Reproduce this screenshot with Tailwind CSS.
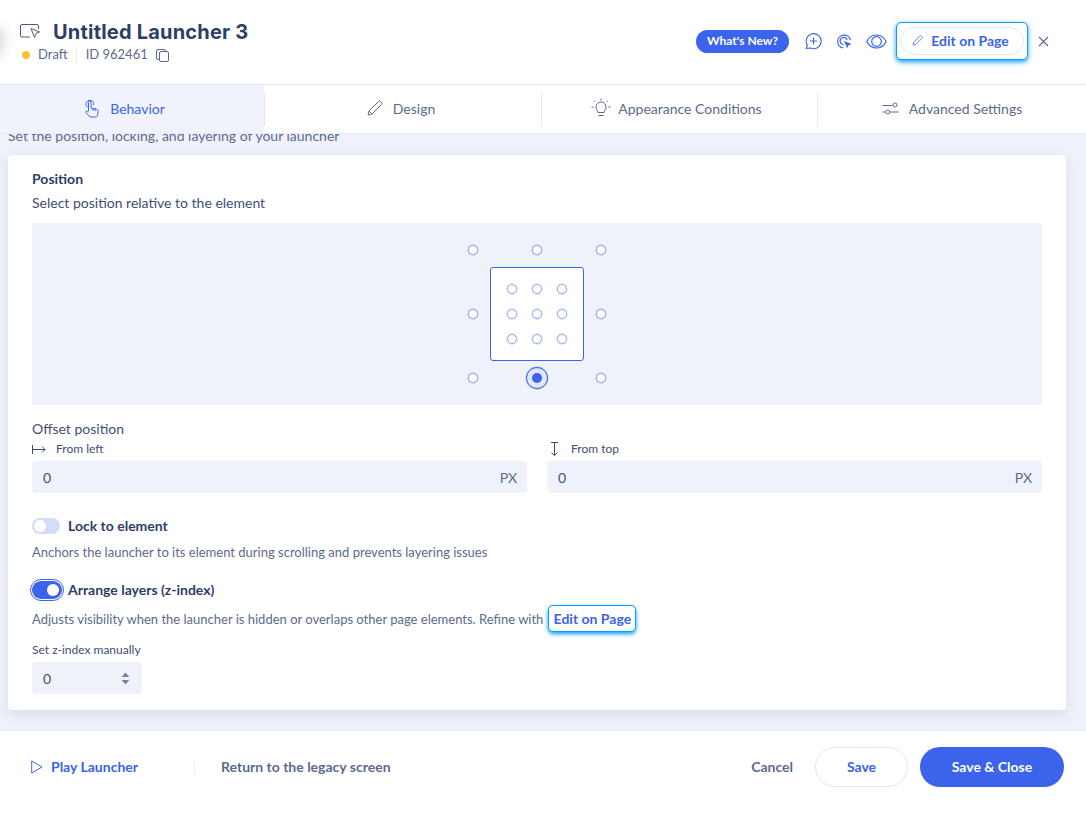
<!DOCTYPE html>
<html lang="en">
  <head>
    <meta charset="UTF-8" />
    <title>Untitled Launcher 3</title>
    <script src="https://cdn.jsdelivr.net/npm/@tailwindcss/browser@4"></script>
  </head>
  <body class="bg-white font-['Lato','Open_Sans',sans-serif] text-[#5c6a8d] overflow-hidden">
    <div class="w-[1086px] h-[817px] flex flex-col relative overflow-hidden">
      <!-- soft shadow on the left edge of the header -->
      <div class="absolute left-[-14px] top-[26px] w-[18px] h-[30px] rounded-full bg-[#d8dbe3] blur-[6px]"></div>

      <!-- Header -->
      <header class="h-[85px] shrink-0 border-b border-[#e9ecf7] flex items-start justify-between pl-[20px] pr-[37px]">
        <div class="pt-[19px]">
          <div class="flex items-center h-[24px]">
            <svg class="w-[21px] h-[15px]" viewBox="0 0 21 15" fill="none" stroke="#4b5a80" stroke-width="1">
              <path d="M10 13H2a1.500 1.500 0 0 1-1.500-1.500V2A1.500 1.500 0 0 1 2 .5h15A1.500 1.500 0 0 1 18.500 2v3" />
              <path d="M11 4.500l8.500 3.500-3.500 1.500-1.500 4z" fill="white" />
            </svg>
            <h1 class="ml-[12px] pt-[1px] font-['Inter',sans-serif] text-[20px] font-bold text-[#2c3e68] tracking-[0.2px]">Untitled Launcher 3</h1>
          </div>
          <div class="flex items-center mt-[3px] text-[13px] h-[18px]">
            <span class="w-[8px] h-[8px] ml-[2px] rounded-full bg-[#fcc132]"></span>
            <span class="ml-[8px]">Draft</span>
            <span class="w-px h-[16px] bg-[#e9ecf7] ml-[8px] mr-[9px]"></span>
            <span>ID 962461</span>
            <svg class="w-[13px] h-[13px] ml-[8px]" viewBox="0 0 13 13" fill="none" stroke="#5c6a8d" stroke-width="1">
              <rect x="3.500" y="2.500" width="9" height="10" rx="1.500" />
              <path d="M3.500 10.500H2A1.500 1.500 0 0 1 .5 9V2A1.500 1.500 0 0 1 2 .5h6A1.500 1.500 0 0 1 9.500 2" />
            </svg>
          </div>
        </div>

        <div class="flex items-center pt-[22px]">
          <span class="w-[93px] h-[23px] rounded-full bg-[#3b63ec] text-white text-[12px] font-bold flex items-center justify-center">What's New?</span>
          <svg class="w-[18px] h-[18px] ml-[15px]" viewBox="0 0 18 18" fill="none" stroke="#3b63ec" stroke-width="1.100">
            <path d="M2 16.500l1.500-3A7.500 7.500 0 1 1 6.500 16l-4.500.5z" stroke-linejoin="round" />
            <path d="M9.500 5.500v7M6 9h7" />
          </svg>
          <svg class="w-[17px] h-[17px] ml-[14px]" viewBox="0 0 17 17" fill="none" stroke="#3b63ec" stroke-width="1.200">
            <path d="M7 15A6.500 6.500 0 1 1 14.500 7" />
            <path d="M7.500 11.500A3.500 3.500 0 1 1 11 7" />
            <path d="M8 8l7.500 3-3 1.200-1.200 3z" fill="#3b63ec" stroke="none" />
          </svg>
          <svg class="w-[21px] h-[15px] ml-[13px]" viewBox="0 0 21 15" fill="none" stroke="#3b63ec" stroke-width="1.200">
            <path d="M.8 7.500C3 3 6.500 1 10.500 1s7.500 2 9.700 6.500C18 12 14.500 14 10.500 14S3 12 .8 7.500z" />
            <circle cx="10.500" cy="7.500" r="4.800" />
          </svg>
          <div class="ml-[9px] w-[132px] h-[38px] rounded-[5px] border border-[#0a9bff] bg-white shadow-[0_2px_5px_#0a9bff] flex items-center justify-center">
            <span class="w-[124px] h-[28px] rounded-full border border-[#dfe5fb] flex items-center justify-center text-[14px] font-bold text-[#3b63ec] pr-[3px] pb-[1px]">
              <svg class="w-[11px] h-[11px] mr-[8px]" viewBox="0 0 11 11" fill="none" stroke="#5d7cf0" stroke-width="0.900">
                <path d="M1 10l.7-3L7.800 1a1 1 0 0 1 1.400 0l.8.8a1 1 0 0 1 0 1.400L4 9.300z" stroke-linejoin="round" />
              </svg>
              Edit on Page
            </span>
          </div>
          <svg class="w-[11px] h-[11px] ml-[10px]" viewBox="0 0 11 11" fill="none" stroke="#5c6a8d" stroke-width="1.100">
            <path d="M1 1l9 9M10 1l-9 9" />
          </svg>
        </div>
      </header>

      <!-- Tabs -->
      <nav class="h-[49px] shrink-0 border-b border-[#e9ecf7] flex text-[14px] bg-white relative z-10">
        <div class="w-[264px] bg-[#f0f3fb] flex items-center justify-center text-[#3b63ec] pr-[14px] pb-[2px]">
          <svg class="w-[14px] h-[19px] mr-[11px]" viewBox="0 0 14 19" fill="none" stroke="#3b63ec" stroke-width="1">
            <path d="M3 8.500A3.800 3.800 0 1 1 8.500 6" />
            <path d="M3.500 12V3.500a1.300 1.300 0 0 1 2.600 0V9l5.500 1.200c1 .2 1.600 1 1.500 2l-.5 4c-.1.900-.9 1.800-2 1.800H6c-.8 0-1.400-.4-1.900-1L1 13.500c-.6-.9.600-2 1.500-1.300z" stroke-linejoin="round" />
            <path d="M8 9v3M10.200 9.500V12" />
          </svg>
          Behavior
        </div>
        <div class="w-[277px] flex items-center justify-center pr-[4px] pb-[2px]">
          <div class="border-l border-[#e4e8f6] h-[33px] self-center mt-[2px] mr-auto"></div>
          <svg class="w-[16px] h-[16px] mr-[10px]" viewBox="0 0 16 16" fill="none" stroke="#5c6a8d" stroke-width="1">
            <path d="M1 15l1-4L11.500 1.500a1.500 1.500 0 0 1 2.100 0l.9.9a1.500 1.500 0 0 1 0 2.100L5 14z" stroke-linejoin="round" />
            <path d="M2 11l3 3" />
          </svg>
          Design
          <div class="mr-auto"></div>
        </div>
        <div class="w-[276px] flex items-center justify-center pr-[6px] pb-[2px]">
          <div class="border-l border-[#e4e8f6] h-[33px] self-center mt-[2px] mr-auto"></div>
          <svg class="w-[20px] h-[20px] mr-[7px]" viewBox="0 0 20 20" fill="none" stroke="#5c6a8d" stroke-width="1">
            <path d="M7 13.500c0-2-2-2.500-2-5.500a5 5 0 0 1 10 0c0 3-2 3.500-2 5.500z" transform="translate(0 1)" />
            <path d="M7.500 17.500h5M10 .5v2M3.500 2.800l1 1.200M16.500 2.800l-1 1.200M.5 9h2M17.500 9h2" />
          </svg>
          Appearance Conditions
          <div class="mr-auto"></div>
        </div>
        <div class="flex-1 flex items-center justify-center pl-[2px] pb-[2px]">
          <div class="border-l border-[#e4e8f6] h-[33px] self-center mt-[2px] -ml-[2px] mr-auto"></div>
          <svg class="w-[17px] h-[13px] mr-[10px]" viewBox="0 0 17 13" fill="none" stroke="#5c6a8d" stroke-width="1">
            <path d="M.5 3.500h10M.5 10h3M8 10h8.500" />
            <circle cx="13" cy="3" r="2" />
            <circle cx="5.800" cy="10" r="2" />
          </svg>
          <span>Advanced Settings</span>
          <div class="mr-auto"></div>
        </div>
      </nav>

      <!-- Content -->
      <main class="flex-1 bg-[#eff2fa] overflow-hidden px-[8px]">
        <p class="h-[21px] -mt-[9px] mb-[9px] text-[14px] leading-[21px]">Set the position, locking, and layering of your launcher</p>
        <section class="w-[1058px] h-[555px] bg-white rounded-[4px] shadow-[0_4px_14px_rgba(60,75,120,0.13)] px-[24px] pt-[15px] text-[13px]">
          <h2 class="text-[14px] leading-[17px] font-bold text-[#2e3d66]">Position</h2>
          <p class="mt-[7px] leading-[17px] text-[#3f4d75] text-[14px]">Select position relative to the element</p>

          <div class="mt-[12px] h-[182px] rounded-[2px] bg-[#eff2fa] flex items-center justify-center">
            <div class="grid grid-cols-[34px_94px_34px] grid-rows-[34px_94px_34px] place-items-center [&>span]:shadow-[0_0_0_0.4px_#9db0f5]">
              <span class="w-[10px] h-[10px] rounded-full bg-white border border-[#9db0f5]"></span>
              <span class="w-[10px] h-[10px] rounded-full bg-white border border-[#9db0f5]"></span>
              <span class="w-[10px] h-[10px] rounded-full bg-white border border-[#9db0f5]"></span>
              <span class="w-[10px] h-[10px] rounded-full bg-white border border-[#9db0f5]"></span>
              <div class="w-[94px] h-[94px] rounded-[3px] bg-white border border-[#3b63ec] grid grid-cols-[25px_25px_25px] grid-rows-[25px_25px_25px] place-items-center place-content-center [&>span]:shadow-[0_0_0_0.4px_#9db0f5]">
                <span class="w-[10px] h-[10px] rounded-full border border-[#9db0f5]"></span>
                <span class="w-[10px] h-[10px] rounded-full border border-[#9db0f5]"></span>
                <span class="w-[10px] h-[10px] rounded-full border border-[#9db0f5]"></span>
                <span class="w-[10px] h-[10px] rounded-full border border-[#9db0f5]"></span>
                <span class="w-[10px] h-[10px] rounded-full border border-[#9db0f5]"></span>
                <span class="w-[10px] h-[10px] rounded-full border border-[#9db0f5]"></span>
                <span class="w-[10px] h-[10px] rounded-full border border-[#9db0f5]"></span>
                <span class="w-[10px] h-[10px] rounded-full border border-[#9db0f5]"></span>
                <span class="w-[10px] h-[10px] rounded-full border border-[#9db0f5]"></span>
              </div>
              <span class="w-[10px] h-[10px] rounded-full bg-white border border-[#9db0f5]"></span>
              <span class="w-[10px] h-[10px] rounded-full bg-white border border-[#9db0f5]"></span>
              <span class="w-[22px] h-[22px] rounded-full bg-[#e1e7fb] border border-[#3b63ec] flex items-center justify-center">
                <span class="w-[10px] h-[10px] rounded-full bg-[#3b63ec]"></span>
              </span>
              <span class="w-[10px] h-[10px] rounded-full bg-white border border-[#9db0f5]"></span>
            </div>
          </div>

          <p class="mt-[15px] text-[14px] leading-[17px] text-[#3f4d75]">Offset position</p>
          <div class="mt-[4px] grid grid-cols-2 gap-x-[20px]">
            <div>
              <div class="flex items-center h-[16px] text-[12px] text-[#3f4d75]">
                <svg class="w-[14px] h-[9px] mr-[10px]" viewBox="0 0 14 9" fill="none" stroke="#3f4d75" stroke-width="1">
                  <path d="M.5 0v9M.5 4.500h12.500M10 1.500l3 3-3 3" />
                </svg>
                From left
              </div>
              <div class="mt-[4px] h-[32px] rounded-[4px] bg-[#eff2fa] flex items-center justify-between px-[11px] text-[14px]">
                <span class="text-[#3f4d75]">0</span><span class="mr-[-1px]">PX</span>
              </div>
            </div>
            <div>
              <div class="flex items-center h-[16px] text-[12px] text-[#3f4d75]">
                <svg class="w-[9px] h-[14px] ml-[3px] mr-[12px]" viewBox="0 0 9 14" fill="none" stroke="#3f4d75" stroke-width="1">
                  <path d="M1 .5h7M4.500.5v13M1.500 10.500l3 3 3-3" />
                </svg>
                From top
              </div>
              <div class="mt-[4px] h-[32px] rounded-[4px] bg-[#eff2fa] flex items-center justify-between px-[11px] text-[14px]">
                <span class="text-[#3f4d75]">0</span><span class="mr-[-1px]">PX</span>
              </div>
            </div>
          </div>

          <div class="mt-[25px] flex items-center h-[16px]">
            <span class="w-[28px] h-[16px] rounded-full bg-[#d5dcf8] flex items-center pl-[2px]">
              <span class="w-[12px] h-[12px] rounded-full bg-white"></span>
            </span>
            <span class="ml-[8px] -mt-[2px] text-[14px] font-bold text-[#2e3d66]">Lock to element</span>
          </div>
          <p class="mt-[10px] leading-[16px]">Anchors the launcher to its element during scrolling and prevents layering issues</p>

          <div class="mt-[19px] flex items-center h-[22px]">
            <span class="-ml-[2px] w-[34px] h-[22px] rounded-full border border-[#3b63ec] flex items-center justify-center">
              <span class="w-[30px] h-[18px] rounded-full bg-[#3b63ec] flex items-center justify-end pr-[3px]">
                <span class="w-[12px] h-[12px] rounded-full bg-white"></span>
              </span>
            </span>
            <span class="ml-[4px] -mt-[2px] text-[14px] font-bold text-[#2e3d66]">Arrange layers (z-index)</span>
          </div>
          <div class="mt-[5px] flex items-center h-[28px]">
            <span>Adjusts visibility when the launcher is hidden or overlaps other page elements. Refine with</span>
            <span class="ml-[5px] -mt-[3px] w-[88px] h-[27px] rounded-[5px] border border-[#0a9bff] bg-white shadow-[0_2px_4px_#0a9bff] flex items-center justify-center text-[14px] font-bold text-[#3b63ec]">Edit on Page</span>
          </div>
          <p class="mt-[8px] text-[12px] leading-[16px] text-[#3f4d75]">Set z-index manually</p>
          <div class="mt-[4px] w-[110px] h-[32px] rounded-[4px] bg-[#eff2fa] flex items-center justify-between pl-[11px] pr-[12px] text-[14px] text-[#3f4d75]">
            <span>0</span>
            <svg class="w-[9px] h-[13px]" viewBox="0 0 9 13" fill="#76829f">
              <path d="M4.500.5l3.800 4.500H.7zM4.500 12.500L.7 8h7.600z" />
            </svg>
          </div>
        </section>
      </main>

      <!-- Footer -->
      <footer class="h-[87px] shrink-0 border-t border-[#e9ecf7] bg-white flex items-center pl-[31px] pr-[22px] pb-[14px] text-[14px] font-bold">
        <svg class="w-[12px] h-[14px] mr-[8px]" viewBox="0 0 12 14" fill="none" stroke="#3b63ec" stroke-width="1">
          <path d="M.7 1v12l10.300-6z" stroke-linejoin="round" />
        </svg>
        <span class="text-[#3b63ec] -mt-[2px]">Play Launcher</span>
        <span class="w-px h-[16px] bg-[#eef0f8] ml-[56px] mr-[26px]"></span>
        <span class="-mt-[2px]">Return to the legacy screen</span>
        <span class="ml-auto -mt-[2px] mr-[1px]">Cancel</span>
        <span class="ml-[21px] w-[93px] h-[40px] pb-[2px] rounded-full border border-[#dfe5fb] flex items-center justify-center text-[#3b63ec]">Save</span>
        <span class="ml-[12px] w-[144px] h-[40px] pb-[2px] rounded-full bg-[#3b63ec] flex items-center justify-center text-white">Save &amp; Close</span>
      </footer>
    </div>
  </body>
</html>
